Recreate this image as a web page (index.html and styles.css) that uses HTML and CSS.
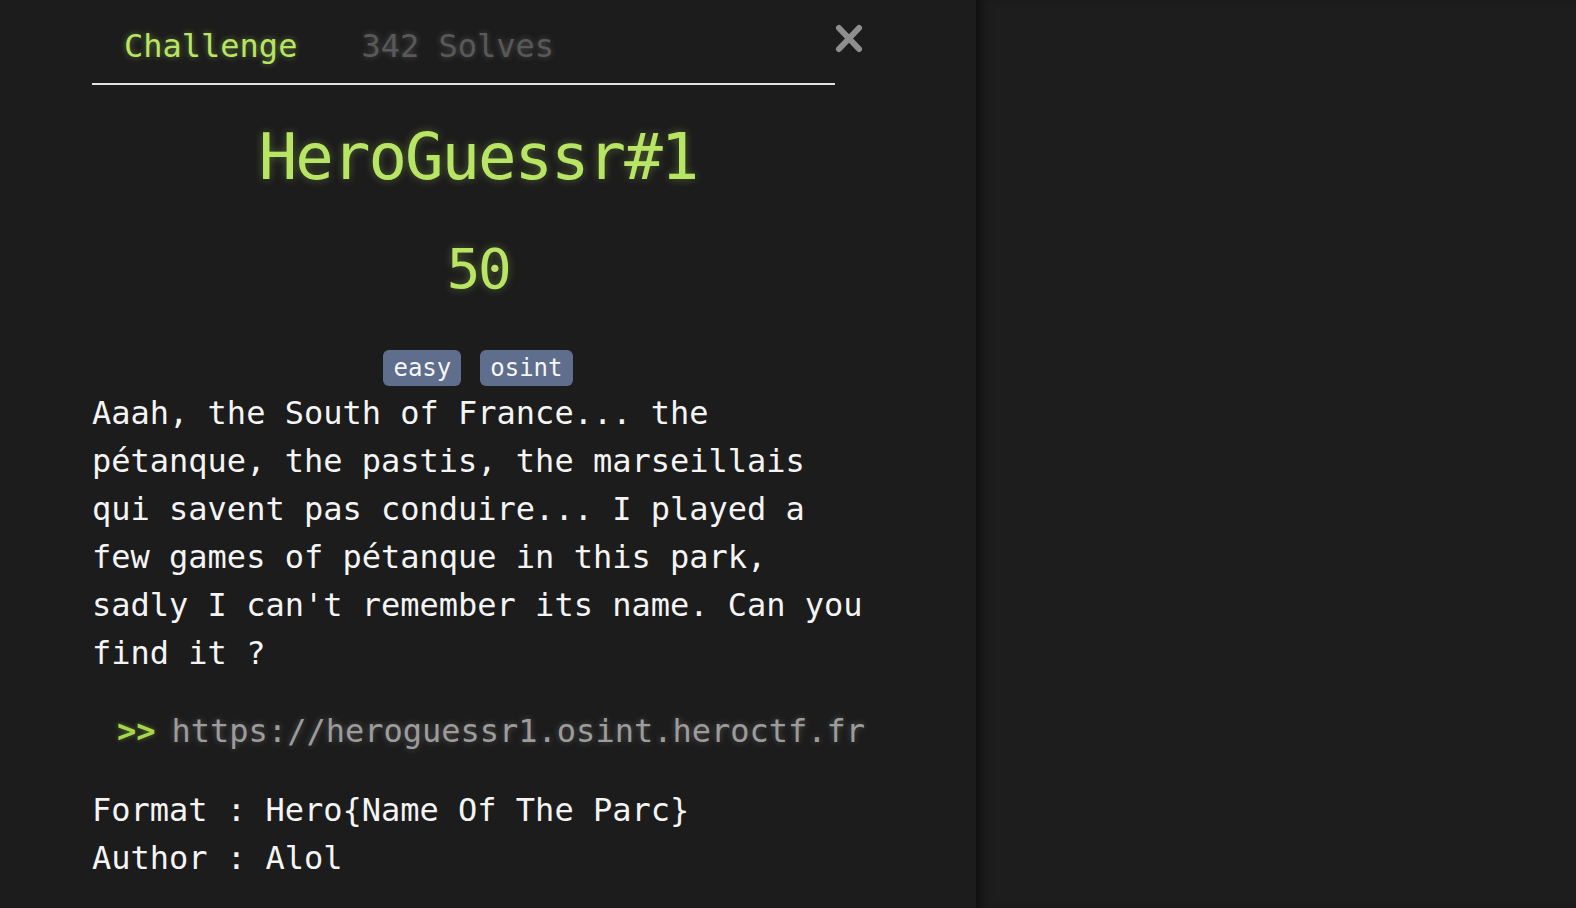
FILE: index.html
```html
<!DOCTYPE html>
<html lang="en">
<head>
<meta charset="utf-8">
<title>HeroGuessr#1</title>
<link rel="stylesheet" href="styles.css">
</head>
<body>
<div class="page">
  <section class="modal">
    <header class="modal-head">
      <nav class="tabs">
        <span class="tab tab-active">Challenge</span>
        <span class="tab tab-muted">342 Solves</span>
      </nav>
      <button class="close" aria-label="Close">
        <svg width="30" height="32" viewBox="0 0 30 32"><path d="M5 6 L25 27 M25 6 L5 27" stroke="#8e8e8e" stroke-width="6" stroke-linecap="round" fill="none"/></svg>
      </button>
    </header>
    <h1 class="title">HeroGuessr#1</h1>
    <div class="points">50</div>
    <div class="tags">
      <span class="tag">easy</span>
      <span class="tag">osint</span>
    </div>
    <p class="desc">Aaah, the South of France... the pétanque, the pastis, the marseillais qui savent pas conduire... I played a few games of pétanque in this park, sadly I can't remember its name. Can you find it ?</p>
    <p class="link"><span class="arrow">&gt;&gt;</span><span class="url">https://heroguessr1.osint.heroctf.fr</span></p>
    <p class="meta">Format : Hero{Name Of The Parc}<br>Author : Alol</p>
  </section>
  <aside class="backdrop"></aside>
</div>
</body>
</html>
```
FILE: styles.css
```css
* { box-sizing: border-box; }
html, body { margin: 0; padding: 0; height: 100%; }
body {
  background: #1c1c1c;
  font-family: "DejaVu Sans Mono", "Liberation Mono", monospace;
  color: #f4f4f4;
  overflow: hidden;
}
.page {
  display: flex;
  height: 908px;
}
.modal {
  width: 976px;
  flex: none;
  padding: 22px 0 0 92px;
  background: #1c1c1c;
}
.modal-head {
  display: flex;
  align-items: flex-start;
  width: 772px;
}
.tabs {
  display: flex;
  width: 743px;
  border-bottom: 2px solid #e2e2e2;
  padding-bottom: 13px;
}
.tab {
  font-size: 32px;
  line-height: 48px;
  padding: 0 32px;
}
.tab-active {
  color: #b8e664;
  text-shadow: 0 0 6px rgba(184, 230, 100, 0.45);
}
.tab-muted {
  color: #595959;
  text-shadow: 0 0 6px rgba(140, 140, 140, 0.45);
}
.close {
  margin: 0 0 0 -1px;
  padding: 0;
  border: 0;
  background: none;
  width: 30px;
  height: 32px;
  display: block;
}
.close svg { display: block; }
.title {
  width: 772px;
  margin: 32px 0 0;
  text-align: center;
  font-size: 64px;
  line-height: 80px;
  font-weight: normal;
  letter-spacing: -2px;
  color: #b8e664;
  text-shadow: 0 0 8px rgba(184, 230, 100, 0.35);
}
.points {
  width: 772px;
  margin-top: 40px;
  text-align: center;
  font-size: 56px;
  line-height: 64px;
  letter-spacing: -2.5px;
  color: #b8e664;
  text-shadow: 0 0 8px rgba(184, 230, 100, 0.35);
}
.tags {
  width: 772px;
  margin-top: 49px;
  display: flex;
  justify-content: center;
  gap: 19px;
}
.tag {
  background: #5e6e8c;
  color: #f6f6f6;
  font-size: 24px;
  line-height: 36px;
  padding: 0 10px;
  border-radius: 6px;
}
.desc {
  width: 772px;
  margin: 3px 0 0;
  font-size: 32px;
  line-height: 48px;
}
.link {
  margin: 30px 0 0;
  padding-left: 25px;
  font-size: 32px;
  line-height: 48px;
  white-space: nowrap;
}
.arrow {
  color: #a6d64c;
  font-weight: bold;
  margin-right: 16px;
  text-shadow: 0 0 5px rgba(166, 214, 76, 0.45);
}
.url {
  color: #9c9c9c;
  text-shadow: 0 0 6px rgba(160, 160, 160, 0.4);
}
.meta {
  margin: 31px 0 0;
  font-size: 32px;
  line-height: 48px;
}
.backdrop {
  flex: 1;
  background: #1d1d1d;
  box-shadow: inset 10px 0 12px -6px rgba(0, 0, 0, 0.55);
}
```
